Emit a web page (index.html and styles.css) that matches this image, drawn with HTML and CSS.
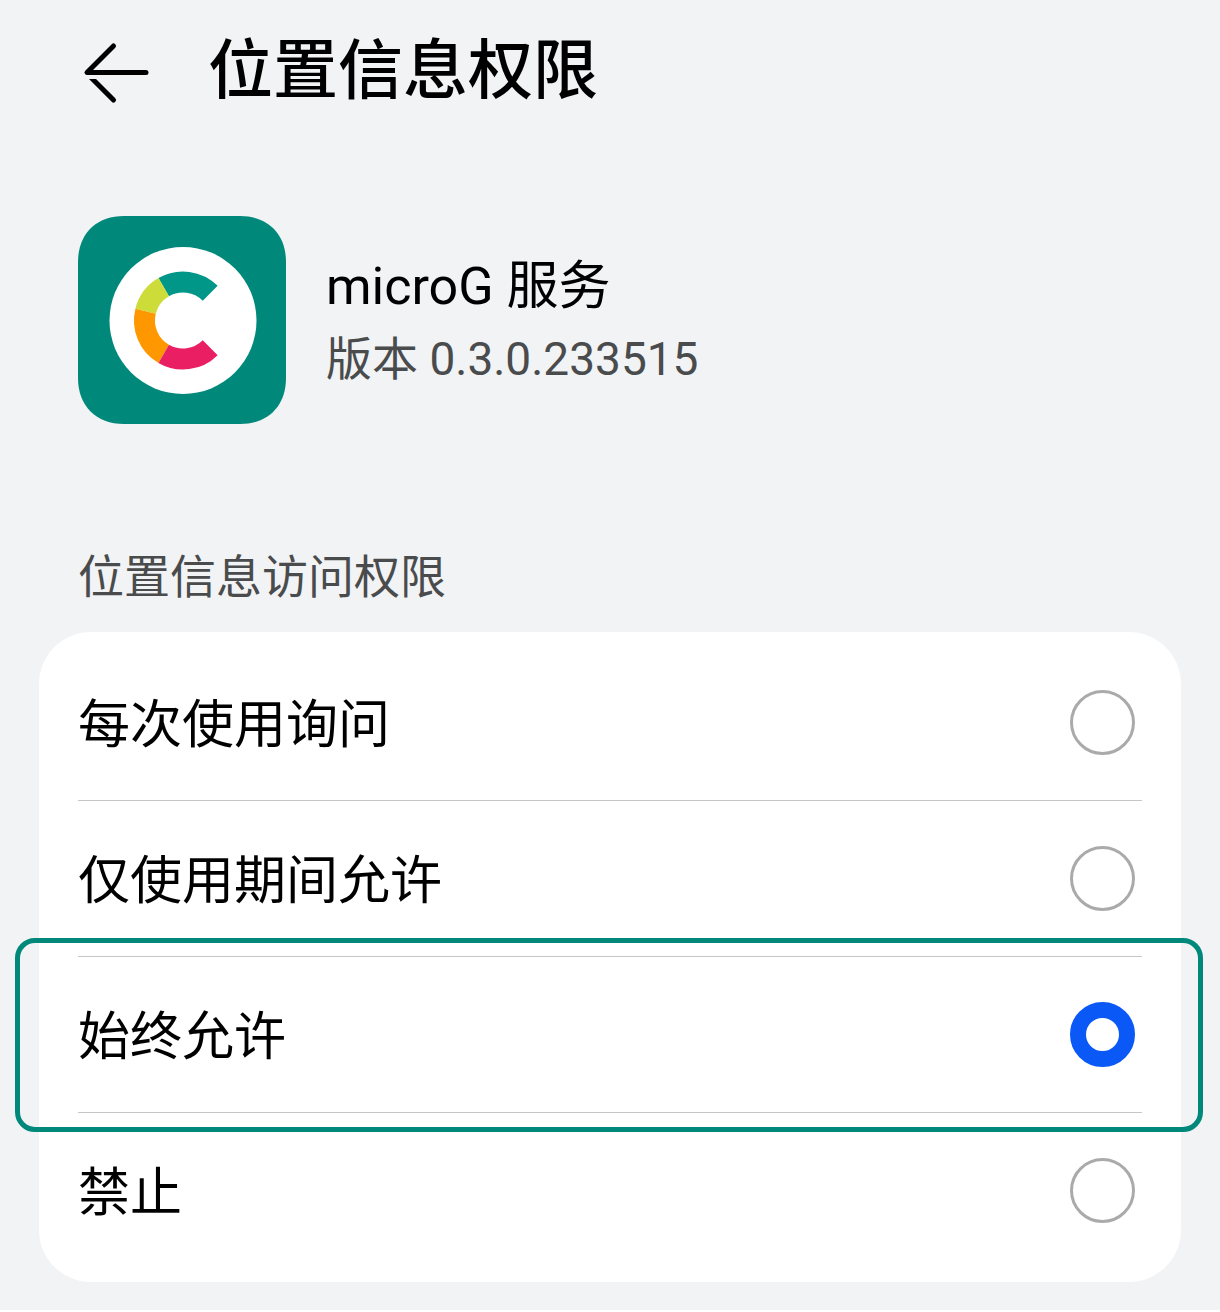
FILE: index.html
```html
<!DOCTYPE html>
<html lang="zh-CN">
<head>
<meta charset="utf-8">
<meta name="viewport" content="width=device-width, initial-scale=1">
<title>位置信息权限</title>
<link rel="stylesheet" href="styles.css">
</head>
<body>
<main class="page">
  <header class="topbar">
    <button class="back" type="button" aria-label="返回">
      <svg class="back-icon" viewBox="0 0 78 78" aria-hidden="true">
        <path class="back-stroke" d="M35.500 12L9 38.500H68"/>
        <path class="back-tail" d="M11 45H18L37.300 64.200A2.500 2.500 0 0 1 33.700 67.800L13.500 47.500Z"/>
      </svg>
    </button>
    <h1 class="title">位置信息权限</h1>
  </header>

  <section class="app">
    <svg class="app-icon" viewBox="0 0 208 208" role="img" aria-label="microG">
      <path fill="#00897b" d="M46 0H162C190 0 208 18 208 46V162C208 190 190 208 162 208H46C18 208 0 190 0 162V46C0 18 18 0 46 0Z"/>
      <circle cx="105" cy="104.500" r="73.500" fill="#fff"/>
      <g transform="translate(105 104.500)" fill="none" stroke-width="21">
        <path stroke="#009688" d="M27.200 -27.200A38.500 38.500 0 0 0 -19.300 -33.300"/>
        <path stroke="#cddc39" d="M-19.300 -33.300A38.500 38.500 0 0 0 -37.400 -9.300"/>
        <path stroke="#ff9800" d="M-37.400 -9.300A38.500 38.500 0 0 0 -19.300 33.300"/>
        <path stroke="#e91e63" d="M-19.300 33.300A38.500 38.500 0 0 0 27.200 27.200"/>
      </g>
    </svg>
    <div class="app-text">
      <h2 class="app-name">microG 服务</h2>
      <p class="app-version">版本 0.3.0.233515</p>
    </div>
  </section>

  <fieldset class="permission">
    <legend class="section-label">位置信息访问权限</legend>
    <div class="card">
      <label class="option"><span class="option-text">每次使用询问</span><input class="radio" type="radio" name="location" value="ask"></label>
      <label class="option"><span class="option-text">仅使用期间允许</span><input class="radio" type="radio" name="location" value="in-use"></label>
      <label class="option option-highlight"><span class="option-text">始终允许</span><input class="radio" type="radio" name="location" value="always" checked></label>
      <label class="option"><span class="option-text">禁止</span><input class="radio" type="radio" name="location" value="deny"></label>
    </div>
  </fieldset>
</main>
</body>
</html>
```
FILE: styles.css
```css
*,
*::before,
*::after {
  box-sizing: border-box;
}

body {
  margin: 0;
  background: #fff;
  color: #000;
  font-family: Roboto, "Noto Sans CJK SC", sans-serif;
}

.page {
  padding: 0 39px 28px;
  background: #f1f3f5;
}

.topbar {
  display: flex;
  align-items: center;
  gap: 52px;
  height: 146px;
  padding: 0 39px;
}

.back {
  width: 78px;
  height: 78px;
  padding: 0;
  border: 0;
  background: none;
  color: inherit;
  cursor: pointer;
}

.back-icon {
  display: block;
  width: 100%;
  height: 100%;
}

.back-stroke {
  fill: none;
  stroke: currentColor;
  stroke-width: 5;
  stroke-linecap: round;
  stroke-linejoin: round;
}

.back-tail {
  fill: currentColor;
}

.title {
  margin: 0;
  padding-bottom: 4px;
  font-size: 65px;
  font-weight: 500;
  line-height: 78px;
}

.app {
  display: flex;
  align-items: center;
  gap: 40px;
  padding: 70px 39px 72px;
}

.app-icon {
  flex: none;
  width: 208px;
  height: 208px;
}

.app-text {
  padding-top: 6px;
}

.app-name {
  margin: 0;
  font-size: 52px;
  font-weight: 400;
  line-height: 72px;
}

.app-version {
  margin: 0;
  color: #4a4b4c;
  font-size: 46px;
  line-height: 72px;
}

.permission {
  min-width: 0;
  margin: 0;
  padding: 0;
  border: 0;
}

.section-label {
  padding: 39px 39px 13px;
  color: #4a4b4c;
  font-size: 46px;
  line-height: 84px;
}

.card {
  padding: 13px 39px;
  border-radius: 52px;
  background: #fff;
}

.option {
  position: relative;
  display: flex;
  align-items: center;
  justify-content: space-between;
  height: 156px;
  padding-right: 7px;
  border-bottom: 1px solid #c6c6c6;
  font-size: 52px;
  font-weight: 400;
  line-height: 72px;
  cursor: pointer;
}

.option:last-child {
  border-bottom-color: transparent;
}

.option-text {
  padding-top: 6px;
}

.option-highlight::after {
  content: "";
  position: absolute;
  inset: -19px -61px -20px -63px;
  border: 5px solid #00897b;
  border-radius: 20px;
  pointer-events: none;
}

.radio {
  appearance: none;
  flex: none;
  width: 65px;
  height: 65px;
  margin: 0;
  border: 3px solid #aaa;
  border-radius: 50%;
  background: #fff;
  cursor: pointer;
}

.radio:checked {
  border: 16px solid #0a59f7;
}
```
